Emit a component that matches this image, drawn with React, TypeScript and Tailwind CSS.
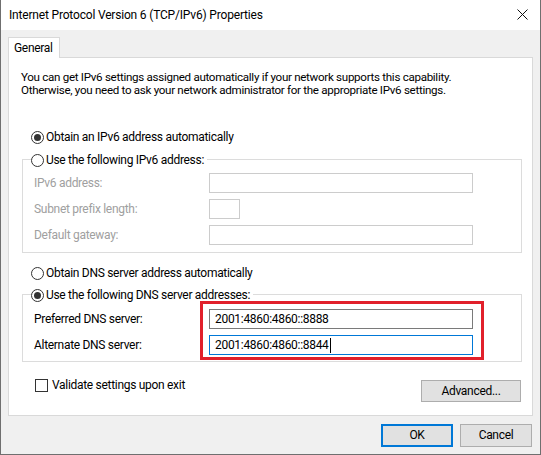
import type { ReactNode } from "react";

const font = { fontFamily: 'Roboto, "Liberation Sans", sans-serif' };

function Radio({ checked }: { checked?: boolean }) {
  return (
    <span className="flex h-[13px] w-[13px] shrink-0 items-center justify-center rounded-full border border-[#333333] bg-white">
      {checked ? <span className="h-[7px] w-[7px] rounded-full bg-[#333333]" /> : null}
    </span>
  );
}

function Field({
  label,
  value,
  disabled,
  focused,
  narrow,
  caret,
  first,
}: {
  label: string;
  value?: string;
  disabled?: boolean;
  focused?: boolean;
  narrow?: boolean;
  caret?: boolean;
  first?: boolean;
}) {
  const border = disabled ? "border-[#cccccc]" : focused ? "border-[#0078d7]" : "border-[#7a7a7a]";
  return (
    <div className={`${first ? "mt-[5px]" : "mt-[6px]"} flex h-[20px] items-center pl-[11px]`}>
      <span className={`w-[175px] ${disabled ? "text-[#a0a0a0]" : "text-black"}`}>{label}</span>
      <div className={`flex h-[20px] items-center border bg-white pl-[5px] ${border} ${narrow ? "w-[31px]" : "w-[264px]"}`}>
        {value}
        {caret ? <span className="ml-px h-[15px] w-px bg-black" /> : null}
      </div>
    </div>
  );
}

function GroupBox({ legend, children, height }: { legend: ReactNode; children: ReactNode; height: string }) {
  return (
    <div className={`relative ml-[13px] mr-[10px] border border-[#dcdcdc] ${height}`}>
      <div className="-mt-[8px] ml-[8px] flex h-[16px] w-fit items-center gap-[2px] bg-white pr-[3px]">{legend}</div>
      {children}
    </div>
  );
}

export default function App() {
  return (
    <div
      className="flex h-[455px] w-[541px] flex-col border-x border-b border-[#6f6f6f] bg-[#f0f0f0] text-[12px] leading-[15px] tracking-[-0.3px] text-black"
      style={font}
    >
      <div className="flex h-[30px] shrink-0 items-center justify-between bg-white pl-[8px] pr-[12px]">
        <span className="tracking-[-0.18px]">Internet Protocol Version 6 (TCP/IPv6) Properties</span>
        <svg width="11" height="11" viewBox="0 0 11 11" className="mb-px">
          <path d="M0.5 0.5 L10.5 10.5 M10.5 0.5 L0.5 10.5" stroke="#111" strokeWidth="1" fill="none" />
        </svg>
      </div>

      <div className="px-[7px] pt-[7px]">
        <div className="relative z-10 -mb-px flex h-[21px] w-[52px] items-start border border-b-0 border-[#d9d9d9] bg-white pl-[5px] pt-[3px]">
          General
        </div>

        <div className="h-[359px] border border-[#d9d9d9] bg-white">
          <p className="mt-[13px] pl-[12px] text-[11.6px] leading-[13px]">
            You can get IPv6 settings assigned automatically if your network supports this capability.
            <br />
            Otherwise, you need to ask your network administrator for the appropriate IPv6 settings.
          </p>

          <div className="ml-[22px] mt-[32px] flex h-[16px] items-center gap-[2px]">
            <Radio checked />
            <span>Obtain an IPv6 address automatically</span>
          </div>

          <div className="mt-[14px]">
            <GroupBox
              height="h-[94px]"
              legend={
                <>
                  <Radio />
                  <span>Use the following IPv6 address:</span>
                </>
              }
            >
              <Field first disabled label="IPv6 address:" />
              <Field disabled narrow label="Subnet prefix length:" />
              <Field disabled label="Default gateway:" />
            </GroupBox>
          </div>

          <div className="ml-[22px] mt-[12px] flex h-[16px] items-center gap-[2px]">
            <Radio />
            <span>Obtain DNS server address automatically</span>
          </div>

          <div className="mt-[13px]">
            <GroupBox
              height="h-[68px]"
              legend={
                <>
                  <Radio checked />
                  <span>Use the following DNS server addresses:</span>
                </>
              }
            >
              <Field label="Preferred DNS server:" value="2001:4860:4860::8888" />
              <Field focused caret label="Alternate DNS server:" value="2001:4860:4860::8844" />
              {/* highlight around the DNS entries */}
              <div className="pointer-events-none absolute left-[177px] top-[6px] h-[59px] w-[284px] border-[3px] border-[#e1202b]" />
            </GroupBox>
          </div>

          <div className="ml-[26px] mr-[11px] mt-[18px] flex items-start justify-between">
            <label className="-mt-px flex h-[13px] items-center gap-[4px]">
              <span className="h-[13px] w-[13px] border border-[#333333] bg-white" />
              <span>Validate settings upon exit</span>
            </label>
            <button
              type="button"
              className="flex h-[22px] w-[100px] items-center justify-center border border-[#adadad] bg-[#e1e1e1]"
            >
              Advanced...
            </button>
          </div>
        </div>

        <div className="mr-px mt-[8px] flex justify-end gap-[7px]">
          <button
            type="button"
            className="flex h-[23px] w-[72px] items-center justify-center border-2 border-[#0078d7] bg-[#e1e1e1]"
          >
            OK
          </button>
          <button
            type="button"
            className="flex h-[23px] w-[72px] items-center justify-center border border-[#adadad] bg-[#e1e1e1]"
          >
            Cancel
          </button>
        </div>
      </div>
    </div>
  );
}
